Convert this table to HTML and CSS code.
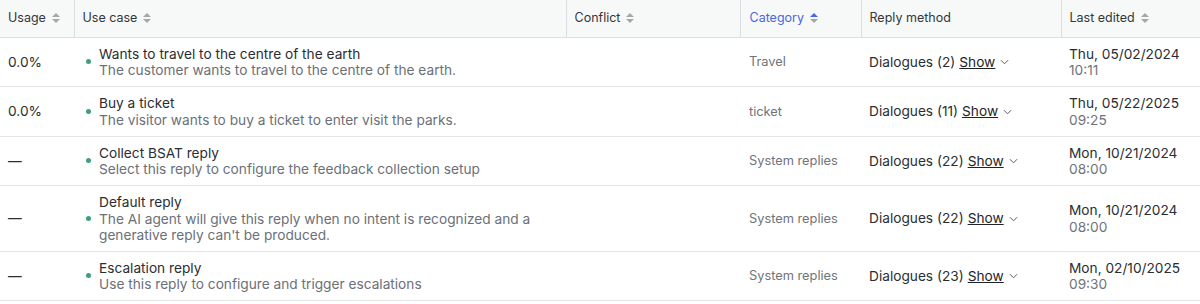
FILE: index.html
```html
<!DOCTYPE html>
<html>
<head>
<meta charset="utf-8">
<link rel="stylesheet" href="styles.css">
</head>
<body>
<table class="grid">
  <colgroup>
    <col class="c-usage"><col class="c-use"><col class="c-conflict"><col class="c-cat"><col class="c-reply"><col class="c-edited">
  </colgroup>
  <thead>
    <tr>
      <th><span class="th-in">Usage <svg class="sort" viewBox="0 0 10 12"><path class="up" d="M1 5 L5 1 L9 5 Z"/><path class="down" d="M1 7 L5 11 L9 7 Z"/></svg></span></th>
      <th><span class="th-in">Use case <svg class="sort" viewBox="0 0 10 12"><path class="up" d="M1 5 L5 1 L9 5 Z"/><path class="down" d="M1 7 L5 11 L9 7 Z"/></svg></span></th>
      <th><span class="th-in">Conflict <svg class="sort" viewBox="0 0 10 12"><path class="up" d="M1 5 L5 1 L9 5 Z"/><path class="down" d="M1 7 L5 11 L9 7 Z"/></svg></span></th>
      <th class="active"><span class="th-in">Category <svg class="sort" viewBox="0 0 10 12"><path class="up on" d="M1 5 L5 1 L9 5 Z"/><path class="down" d="M1 7 L5 11 L9 7 Z"/></svg></span></th>
      <th><span class="th-in">Reply method</span></th>
      <th class="last"><span class="th-in">Last edited <svg class="sort" viewBox="0 0 10 12"><path class="up" d="M1 5 L5 1 L9 5 Z"/><path class="down" d="M1 7 L5 11 L9 7 Z"/></svg></span></th>
    </tr>
  </thead>
  <tbody>
    <tr>
      <td class="usage">0.0%</td>
      <td><div class="uc"><span class="dot"></span><div class="uc-text"><div class="uc-title">Wants to travel to the centre of the earth</div><div class="uc-desc">The customer wants to travel to the centre of the earth.</div></div></div></td>
      <td></td>
      <td class="cat">Travel</td>
      <td><div class="reply">Dialogues (2) <span class="show">Show</span><svg class="chev" viewBox="0 0 10 6"><path d="M1 1 L5 5 L9 1"/></svg></div></td>
      <td><div class="date">Thu, 05/02/2024</div><div class="time">10:11</div></td>
    </tr>
    <tr>
      <td class="usage">0.0%</td>
      <td><div class="uc"><span class="dot"></span><div class="uc-text"><div class="uc-title">Buy a ticket</div><div class="uc-desc">The visitor wants to buy a ticket to enter visit the parks.</div></div></div></td>
      <td></td>
      <td class="cat">ticket</td>
      <td><div class="reply">Dialogues (11) <span class="show">Show</span><svg class="chev" viewBox="0 0 10 6"><path d="M1 1 L5 5 L9 1"/></svg></div></td>
      <td><div class="date">Thu, 05/22/2025</div><div class="time">09:25</div></td>
    </tr>
    <tr>
      <td class="usage">—</td>
      <td><div class="uc"><span class="dot"></span><div class="uc-text"><div class="uc-title">Collect BSAT reply</div><div class="uc-desc">Select this reply to configure the feedback collection setup</div></div></div></td>
      <td></td>
      <td class="cat">System replies</td>
      <td><div class="reply">Dialogues (22) <span class="show">Show</span><svg class="chev" viewBox="0 0 10 6"><path d="M1 1 L5 5 L9 1"/></svg></div></td>
      <td><div class="date">Mon, 10/21/2024</div><div class="time">08:00</div></td>
    </tr>
    <tr>
      <td class="usage">—</td>
      <td><div class="uc"><span class="dot"></span><div class="uc-text"><div class="uc-title">Default reply</div><div class="uc-desc">The AI agent will give this reply when no intent is recognized and a generative reply can't be produced.</div></div></div></td>
      <td></td>
      <td class="cat">System replies</td>
      <td><div class="reply">Dialogues (22) <span class="show">Show</span><svg class="chev" viewBox="0 0 10 6"><path d="M1 1 L5 5 L9 1"/></svg></div></td>
      <td><div class="date">Mon, 10/21/2024</div><div class="time">08:00</div></td>
    </tr>
    <tr>
      <td class="usage">—</td>
      <td><div class="uc"><span class="dot"></span><div class="uc-text"><div class="uc-title">Escalation reply</div><div class="uc-desc">Use this reply to configure and trigger escalations</div></div></div></td>
      <td></td>
      <td class="cat">System replies</td>
      <td><div class="reply">Dialogues (23) <span class="show">Show</span><svg class="chev" viewBox="0 0 10 6"><path d="M1 1 L5 5 L9 1"/></svg></div></td>
      <td><div class="date">Mon, 02/10/2025</div><div class="time">09:30</div></td>
    </tr>
  </tbody>
</table>
</body>
</html>
```

FILE: styles.css
```css
* { box-sizing: border-box; }
html, body { margin: 0; padding: 0; background: #fff; }
body {
  font-family: Inter, "Noto Sans", "Liberation Sans", sans-serif;
  color: #2a2e33;
  font-size: 13.7px;
}
.grid {
  width: 1200px;
  border-collapse: collapse;
  table-layout: fixed;
}
.c-usage { width: 74px; }
.c-use { width: 492px; }
.c-conflict { width: 174px; }
.c-cat { width: 121px; }
.c-reply { width: 200px; }
.c-edited { width: 139px; }

thead th {
  height: 37px;
  background: #f7f8f8;
  border-bottom: 1px solid #dcdfe1;
  border-right: 1px solid #dcdfe1;
  text-align: left;
  font-weight: 400;
  font-size: 12.5px;
  color: #33373c;
  padding: 0 8px 1px 8px;
  vertical-align: middle;
}
thead th.last { border-right: none; }
thead th.active { color: #4a67e0; padding-left: 9px; }
.th-in { display: inline-flex; align-items: center; gap: 5px; }
.sort { width: 10px; height: 12px; }
.sort path { fill: #a3a8ad; }
.sort path.on { fill: #4a67e0; }

tbody td {
  border-bottom: 1px solid #e3e5e7;
  padding: 8px 8px;
  vertical-align: middle;
}
.usage { color: #2a2e33; }
.uc { display: flex; align-items: center; }
.dot {
  width: 5px; height: 5px; border-radius: 50%;
  background: #3f9e7c;
  flex: none;
  margin-left: 4px;
  margin-right: 8px;
}
.uc-title { line-height: 16.5px; color: #2a2e33; }
.uc-desc { line-height: 16px; color: #6b7078; }
.cat { font-size: 12.8px; color: #6f747a; padding-left: 9px; }
.reply { display: flex; align-items: center; white-space: nowrap; }
.show { text-decoration: underline; margin-left: 4px; color: #1f2328; }
.chev { width: 9px; height: 6px; margin-left: 5px; margin-top: 1px; }
.chev path { fill: none; stroke: #555a60; stroke-width: 1.1; }
.date { line-height: 16.5px; color: #2a2e33; }
.time { line-height: 16px; color: #6f747a; }
```
